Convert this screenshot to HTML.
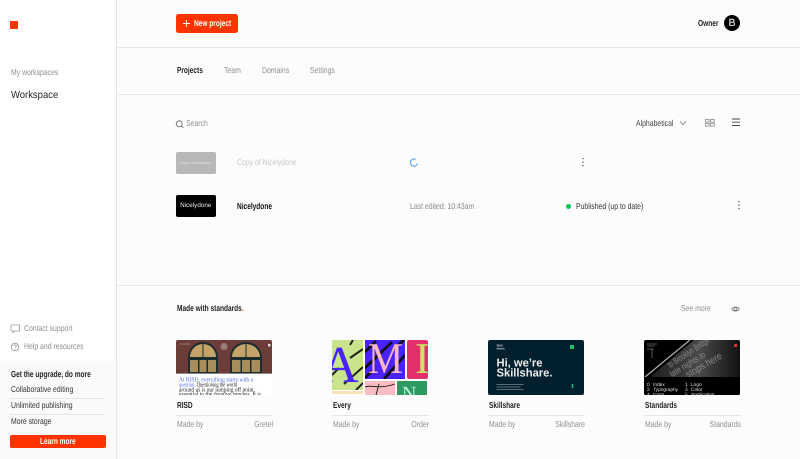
<!DOCTYPE html>
<html><head><meta charset="utf-8"><style>
html,body{margin:0;padding:0}
body{width:800px;height:459px;overflow:hidden;background:#fcfcfc;position:relative;font-family:"Liberation Sans",sans-serif;color:#111;text-rendering:geometricPrecision}
.t{position:absolute;white-space:nowrap;font-size:8.6px;line-height:10px;margin-top:-.7px;transform:scaleX(.8);transform-origin:0 50%}
.r{transform-origin:100% 50%;text-align:right}
.b{font-weight:bold;font-size:8.8px;transform:scaleX(.745)}
.g{color:#8f8f8f}
.l{position:absolute;background:#e6e6e6;height:1px}
.a{position:absolute}
.card{position:absolute;top:340px;width:96px;height:54.5px;overflow:hidden;border-radius:2px}
svg{text-rendering:geometricPrecision}
</style></head><body>
<div class="a" style="left:0;top:0;width:116px;height:459px;background:#fff;border-right:1px solid #e6e6e6"></div>
<div class="a" style="left:0;top:361px;width:116px;height:98px;background:#fafafa"></div>
<div class="a" style="left:10px;top:21px;width:8px;height:8px;background:#ff3300"></div>
<div class="t g" style="left:10.5px;top:68px">My workspaces</div>
<div class="t" style="left:10.5px;top:90.7px;font-size:10.2px;line-height:12px;color:#222;transform:scaleX(.93)">Workspace</div>
<svg class="a" style="left:10px;top:323px" width="11" height="30" fill="none" stroke="#999" stroke-width=".8"><path d="M1 2h8.5v6H5L3.2 9.6V8H1z"/><circle cx="5" cy="24" r="3.8"/><path d="M3.800 23c.3-1.600 2.600-1.400 2.600 0 0 1-1.400 1-1.400 2M5 26v.6"/></svg>
<div class="t g" style="left:24px;top:323.5px">Contact support</div>
<div class="t g" style="left:24px;top:342px">Help and resources</div>
<div class="t b" style="left:10.5px;top:369.5px;color:#222">Get the upgrade, do more</div>
<div class="t" style="left:10.5px;top:384.5px;color:#333">Collaborative editing</div>
<div class="l" style="left:10px;top:398px;width:95px"></div>
<div class="t" style="left:10.5px;top:401px;color:#333">Unlimited publishing</div>
<div class="l" style="left:10px;top:414px;width:95px"></div>
<div class="t" style="left:10.5px;top:417px;color:#333">More storage</div>
<div class="a" style="left:10px;top:435px;width:95.5px;height:13px;background:#ff3300;border-radius:2px"></div>
<div class="t b" style="left:40px;top:437px;color:#fff">Learn more</div>

<div class="l" style="left:117px;top:47px;width:683px"></div>
<div class="l" style="left:117px;top:94px;width:683px"></div>
<div class="l" style="left:117px;top:285px;width:683px"></div>

<div class="a" style="left:176px;top:14px;width:61.5px;height:19px;background:#ff3300;border-radius:2.5px"></div>
<svg class="a" style="left:182px;top:19px" width="9" height="9" stroke="#fff" stroke-width=".9"><path d="M4.500 1v7M1 4.500h7"/></svg>
<div class="t b" style="left:193.5px;top:18.7px;color:#fff">New project</div>
<div class="t b" style="left:698px;top:18.7px;color:#222">Owner</div>
<div class="a" style="left:724px;top:15px;width:16px;height:16px;border-radius:50%;background:#000;color:#fff;font-size:10.5px;line-height:16.5px;text-align:center">B</div>

<div class="t b" style="left:176.5px;top:66px;color:#222">Projects</div>
<div class="t g" style="left:223.5px;top:66px">Team</div>
<div class="t g" style="left:261.5px;top:66px">Domains</div>
<div class="t g" style="left:310px;top:66px">Settings</div>

<svg class="a" style="left:175px;top:119px" width="9" height="10" fill="none" stroke="#666" stroke-width=".8"><circle cx="4.200" cy="4.800" r="3"/><path d="M6.400 7l2 2"/></svg>
<div class="t g" style="left:186px;top:118.5px">Search</div>
<div class="t" style="left:636px;top:118.5px;color:#444">Alphabetical</div>
<svg class="a" style="left:679px;top:119px" width="8" height="8" fill="none" stroke="#777" stroke-width=".8"><path d="M1 2.500l3 3 3-3"/></svg>
<svg class="a" style="left:705px;top:119px" width="10" height="8" fill="none" stroke="#888" stroke-width=".8"><rect x=".5" y=".5" width="3.600" height="2.600"/><rect x="5.600" y=".5" width="3.600" height="2.600"/><rect x=".5" y="4.500" width="3.600" height="2.600"/><rect x="5.600" y="4.500" width="3.600" height="2.600"/></svg>
<svg class="a" style="left:731px;top:118px" width="10" height="9" stroke="#444" stroke-width=".9"><path d="M1 1h8M1 4.200h8M1 7.500h8"/></svg>

<div class="a" style="left:176px;top:152px;width:39.5px;height:22px;background:#b8b8b8;border-radius:2px;color:#e8e8e8;font-size:3.3px;line-height:22px;text-align:center">Copy of Nicelydone</div>
<div class="t" style="left:236.5px;top:158px;color:#c8c8c8">Copy of Nicelydone</div>
<svg class="a" style="left:409px;top:158px" width="10" height="10" fill="none" stroke="#5ea6ee" stroke-width="1.200"><path d="M6.700 1.400A3.600 3.600 0 1 0 8.500 5.500"/></svg>
<svg class="a" style="left:581px;top:157px" width="4" height="10" fill="#666"><circle cx="2" cy="1.500" r=".8"/><circle cx="2" cy="5" r=".8"/><circle cx="2" cy="8.500" r=".8"/></svg>

<div class="a" style="left:176px;top:195px;width:39.5px;height:22px;background:#000;border-radius:2px;color:#e8e8e8;font-size:6.300px;line-height:22px;text-align:center">Nicelydone</div>
<div class="t b" style="left:236.5px;top:201.5px;color:#111">Nicelydone</div>
<div class="t g" style="left:410px;top:201.5px;color:#888">Last edited: 10:43am</div>
<div class="a" style="left:566px;top:203.5px;width:5px;height:5px;border-radius:50%;background:#0cc15a"></div>
<div class="t" style="left:575.5px;top:201.5px;color:#333">Published (up to date)</div>
<svg class="a" style="left:737px;top:200px" width="4" height="10" fill="#666"><circle cx="2" cy="1.500" r=".8"/><circle cx="2" cy="5" r=".8"/><circle cx="2" cy="8.500" r=".8"/></svg>

<div class="t b" style="left:176.5px;top:304px;color:#222">Made with standards<span style="color:#ff3300">.</span></div>
<div class="t g" style="left:680.5px;top:304px">See more</div>
<svg class="a" style="left:731px;top:305px" width="9" height="8" fill="none" stroke="#777" stroke-width=".8"><path d="M.7 4C2.500 1.200 6.500 1.200 8.300 4 6.500 6.800 2.500 6.800.7 4z"/><circle cx="4.500" cy="4" r="1.400"/></svg>

<div class="card" style="left:176px;background:#fff">
<svg width="96" height="55" style="display:block"><rect width="96" height="33" fill="#6c3d38"/><rect y="33" width="96" height="1" fill="#888"/>
<path d="M12 33V17a15 15 0 0 1 30 0v16zM54 33V17a16 15 0 0 1 32 0v16z" fill="#1b2c2c"/>
<path d="M14 17a13 13 0 0 1 12.500-13v13zM27.500 4a13 13 0 0 1 12.500 13H27.500zM56 17a14 13 0 0 1 13.500-13v13zM70.500 4a14 13 0 0 1 13.500 13H70.500z" fill="#c4a468"/>
<path d="M14 20h8v12h-8zM23.500 20h7v12h-7zM32 20h8v12h-8zM56 20h8.500v12H56zM66 20h8v12h-8zM75.500 20h8.500v12h-8.500z" fill="#a88e5d"/>
<path d="M4 4h10" stroke="#a08a86" stroke-width=".8"/><circle cx="48" cy="6.500" r="3.500" fill="#9b7d76"/><rect x="92" y="4" width="2.500" height="2.500" fill="#ddd"/>
<g font-family="Liberation Serif" font-size="6.400"><text x="3" y="41.500" fill="#4d6bf0" textLength="74" lengthAdjust="spacingAndGlyphs">At RISD, everything starts with a</text><text x="3" y="46.500" fill="#4d6bf0" textLength="58" lengthAdjust="spacingAndGlyphs">question.<tspan fill="#222"> Questioning the world</tspan></text><text x="3" y="51.500" fill="#222" textLength="76" lengthAdjust="spacingAndGlyphs">around us is our jumping off point,</text><text x="3" y="56" fill="#222" textLength="82" lengthAdjust="spacingAndGlyphs">essential to the creative process. It is</text></g></svg></div>
<div class="t b" style="left:176.5px;top:400.5px;color:#222">RISD</div>
<div class="l" style="left:176px;top:415px;width:96.5px"></div>
<div class="t g" style="left:176.5px;top:420px">Made by</div>
<div class="t g r" style="left:172.5px;width:100px;top:420px">Gretel</div>

<div class="card" style="left:332px;background:#fff">
<svg width="96" height="55" style="display:block"><defs><clipPath id="c1"><rect width="31" height="50"/></clipPath><clipPath id="c2"><rect x="33" width="40" height="39"/></clipPath><clipPath id="c3"><rect x="75" width="21" height="39"/></clipPath><clipPath id="c4"><rect x="65" y="41" width="30" height="14"/></clipPath></defs>
<rect width="31" height="50" fill="#c9e58b"/><rect x="33" width="40" height="39" fill="#4a22ff"/><rect x="75" width="21" height="39" rx="2" fill="#e52f6c"/><rect x="33" y="41" width="30" height="14" fill="#fbbcc4"/><rect x="65" y="41" width="30" height="14" fill="#2d9a62"/><rect y="51" width="31" height="3" fill="#fbe0b8"/>
<g clip-path="url(#c1)"><path d="M12 44L31 27M18 18L31 9M0 35L7 28M18 5l3-5M24 50l7-7" stroke="#222" stroke-width="2"/><text x="-11" y="42" font-family="Liberation Serif" font-size="52" fill="#4a22ff">A</text></g>
<g clip-path="url(#c2)"><path d="M33 28L60 2M33 12L44 1M52 39L73 15M62 9L72 0M33 38L40 31" stroke="#111" stroke-width="2.800"/><text x="36" y="33" font-family="Liberation Serif" font-size="44" fill="#f6b6c2" textLength="35" lengthAdjust="spacingAndGlyphs">M</text></g>
<g clip-path="url(#c3)"><text x="83" y="33" font-family="Liberation Serif" font-size="44" fill="#cfe265">I</text></g>
<path d="M33 47c6-3 12 3 30-3M47 44l-3 11" stroke="#111" stroke-width=".9" fill="none"/>
<g clip-path="url(#c4)"><text x="70" y="60" font-family="Liberation Serif" font-size="20" fill="#b9f5d8">N</text></g></svg></div>
<div class="t b" style="left:332.5px;top:400.5px;color:#222">Every</div>
<div class="l" style="left:332px;top:415px;width:96.5px"></div>
<div class="t g" style="left:332.5px;top:420px">Made by</div>
<div class="t g r" style="left:328.5px;width:100px;top:420px">Order</div>

<div class="card" style="left:488px;background:#03202f">
<svg width="96" height="55" style="display:block"><text x="8.500" y="6.500" font-family="Liberation Sans" font-size="3" font-weight="bold" fill="#ccc">Skill</text><text x="8.500" y="9.500" font-family="Liberation Sans" font-size="3" font-weight="bold" fill="#ccc">share.</text><rect x="82" y="5" width="4" height="4" fill="#1bc06a"/><text x="8.500" y="26.500" font-family="Liberation Sans" font-size="11.500" font-weight="bold" fill="#eee" textLength="46" lengthAdjust="spacingAndGlyphs">Hi, we’re</text><text x="8.500" y="36.700" font-family="Liberation Sans" font-size="11.500" font-weight="bold" fill="#eee" textLength="56" lengthAdjust="spacingAndGlyphs">Skillshare.</text><path d="M8.500 44.500h27M8.500 47h24M8.500 49.500h27" stroke="#77858e" stroke-width=".8"/><path d="M84.500 44v4" stroke="#1bc06a" stroke-width="1.500"/></svg></div>
<div class="t b" style="left:488.5px;top:400.5px;color:#222">Skillshare</div>
<div class="l" style="left:488px;top:415px;width:96.5px"></div>
<div class="t g" style="left:488.5px;top:420px">Made by</div>
<div class="t g r" style="left:484.5px;width:100px;top:420px">Skillshare</div>

<div class="card" style="left:644px;background:#000">
<svg width="96" height="55" style="display:block"><defs><linearGradient id="g" x1="0" x2="1"><stop offset="0" stop-color="#1c1c1c"/><stop offset=".55" stop-color="#4a4a4a"/><stop offset="1" stop-color="#111"/></linearGradient></defs><path d="M6 37L50 0H96V37z" fill="url(#g)"/><path d="M1 37L46 0" stroke="#aaa" stroke-width="1.300"/>
<g font-family="Liberation Sans" font-size="9" fill="#8a8a8a"><text transform="translate(26 28) rotate(-33)" textLength="48" lengthAdjust="spacingAndGlyphs">to Brooklyn Bridge</text><text transform="translate(28 37) rotate(-31)" textLength="40" lengthAdjust="spacingAndGlyphs">late nights to</text><text transform="translate(44 38) rotate(-30)" font-size="10" textLength="40" lengthAdjust="spacingAndGlyphs">stops here</text></g>
<rect y="37" width="96" height="18" fill="#000"/><rect x="90" y="4" width="3" height="3" fill="#e33"/><path d="M3 4h10M3 6h8M3 9h7M8 9v9" stroke="#aaa" stroke-width=".5"/>
<g font-family="Liberation Sans" font-size="4.800" fill="#ddd"><text x="3" y="46">0</text><text x="9" y="46">Index</text><text x="41" y="46">1</text><text x="47" y="46">Logo</text><text x="3" y="51">2</text><text x="9" y="51">Typography</text><text x="41" y="51">3</text><text x="47" y="51">Color</text><text x="3" y="56">4</text><text x="9" y="56">Icons</text><text x="41" y="56">5</text><text x="47" y="56">Application</text></g></svg></div>
<div class="t b" style="left:644.5px;top:400.5px;color:#222">Standards</div>
<div class="l" style="left:644px;top:415px;width:96.5px"></div>
<div class="t g" style="left:644.5px;top:420px">Made by</div>
<div class="t g r" style="left:640.5px;width:100px;top:420px">Standards</div>
</body></html>
